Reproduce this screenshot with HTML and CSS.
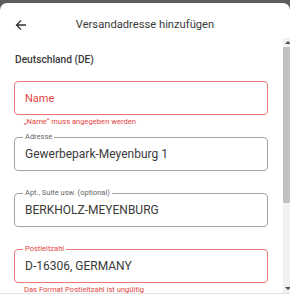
FILE: index.html
```html
<!DOCTYPE html>
<html lang="de">
  <head>
    <meta charset="UTF-8" />
    <meta name="viewport" content="width=device-width, initial-scale=1.0" />
    <title>Versandadresse hinzufügen</title>
    <link rel="stylesheet" href="styles.css">
  </head>
  <body>
    <div class="dialog">
      <div class="header">
        <button class="back" aria-label="Zurück">
          <svg width="12" height="12" viewBox="0 0 12 12">
            <path d="M11 6H1.5M6 1.5L1.5 6L6 10.5" fill="none" stroke="#333" stroke-width="1.3" />
          </svg>
        </button>
        <h1>Versandadresse hinzufügen</h1>
      </div>

      <div class="content">
        <div class="form">
          <div class="country">Deutschland (DE)</div>

          <div class="field invalid">
            <span class="placeholder">Name</span>
          </div>
          <div class="hint">„Name“ muss angegeben werden</div>

          <div class="field">
            <span class="label">Adresse</span>
            <span class="value">Gewerbepark-Meyenburg 1</span>
          </div>
          <div class="hint"></div>

          <div class="field">
            <span class="label">Apt., Suite usw. (optional)</span>
            <span class="value">BERKHOLZ-MEYENBURG</span>
          </div>
          <div class="hint"></div>

          <div class="field invalid">
            <span class="label">Postleitzahl</span>
            <span class="value">D-16306, GERMANY</span>
          </div>
          <div class="hint">Das Format Postleitzahl ist ungültig</div>
        </div>

        <!-- scrollbar of the form area -->
        <div class="scrollbar">
          <span class="arrow-up"></span>
          <span class="thumb"></span>
          <span class="arrow-down"></span>
        </div>
      </div>

      <div class="footer"></div>
    </div>
  </body>
</html>
```

FILE: styles.css
```css
body {
  margin: 0;
  background-color: #5c5c5c;
  font-family: Roboto, "Liberation Sans", Arial, sans-serif;
  color: #3a3a3a;
}
.dialog {
  margin-top: 3px;
  height: 297px;
  background-color: #fff;
  border-radius: 7px 7px 0 0;
  display: flex;
  flex-direction: column;
  overflow: hidden;
}
.header {
  height: 35px;
  box-sizing: border-box;
  padding: 14px 15px 0;
  display: flex;
  align-items: flex-start;
  position: relative;
}
.back {
  width: 16px;
  height: 16px;
  padding: 0;
  border: none;
  background: transparent;
  display: flex;
  align-items: center;
  justify-content: flex-start;
}
.header h1 {
  position: absolute;
  left: 0;
  right: 0;
  top: 14px;
  margin: 0;
  font-size: 11.2px;
  line-height: 16px;
  font-weight: 400;
  text-align: center;
  pointer-events: none;
}
.content {
  display: flex;
  height: 255px;
}
.form {
  flex: 1;
  padding: 14px 15px 0 14px;
  overflow: hidden;
}
.country {
  margin: 0 0 13px 1px;
  font-size: 10.2px;
  line-height: 16px;
  font-weight: 500;
}
.field {
  height: 34px;
  box-sizing: border-box;
  border: 1px solid #a3a3a3;
  border-radius: 4px;
  padding: 0 10px;
  display: flex;
  align-items: center;
  position: relative;
}
.field.invalid {
  border-color: #ec7b77;
}
.label {
  position: absolute;
  left: 8px;
  top: -6px;
  padding: 0 2px;
  background-color: #fff;
  font-size: 7.5px;
  line-height: 10px;
  color: #666;
}
.invalid .label {
  color: #e2453f;
}
.value {
  font-size: 12px;
}
.placeholder {
  font-size: 11px;
  color: #e2453f;
}
.hint {
  height: 22px;
  box-sizing: border-box;
  padding: 1px 0 0 10px;
  font-size: 7.6px;
  line-height: 11px;
  color: #e2453f;
}
.scrollbar {
  width: 7px;
  background-color: #f1f1f1;
  display: flex;
  flex-direction: column;
  align-items: flex-start;
}
.arrow-up,
.arrow-down {
  width: 0;
  height: 0;
  margin: 3px 0 0 2px;
  border-left: 3px solid transparent;
  border-right: 3px solid transparent;
}
.arrow-up {
  border-bottom: 3px solid #505050;
}
.arrow-down {
  margin-top: auto;
  margin-bottom: 3px;
  border-top: 3px solid #505050;
}
.thumb {
  width: 100%;
  height: 156px;
  margin-top: 3px;
  background-color: #c1c1c1;
}
.footer {
  flex: 1;
  border-top: 1px solid #e2e2e2;
}
```
